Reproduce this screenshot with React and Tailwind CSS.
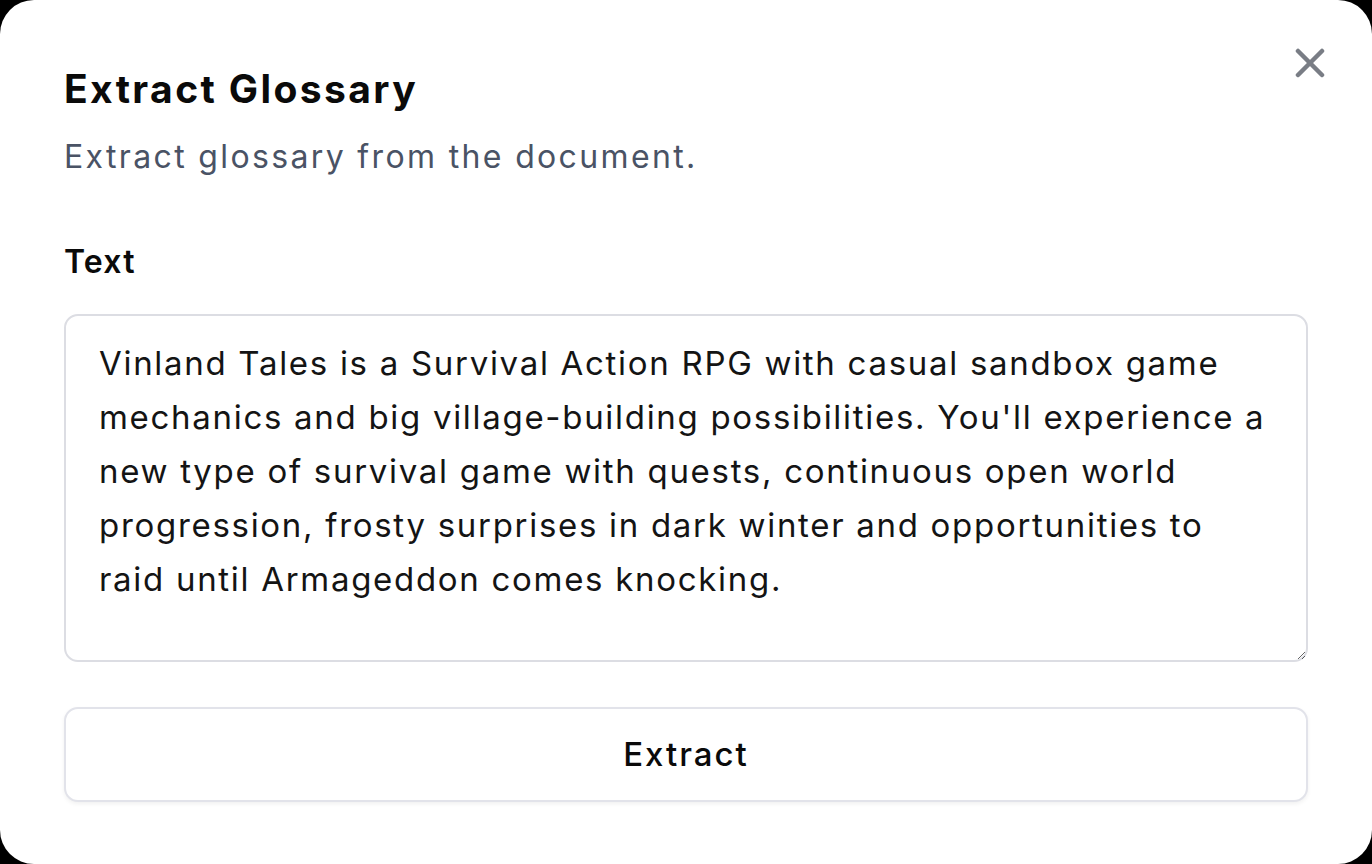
import React, { useState } from 'react';

function CloseIcon() {
  return (
    <svg width="30" height="30" viewBox="0 0 30 30" fill="none" stroke="currentColor" strokeWidth="4.5" strokeLinecap="round">
      <line x1="3" y1="3" x2="27" y2="27" />
      <line x1="27" y1="3" x2="3" y2="27" />
    </svg>
  );
}

const sample = "Vinland Tales is a Survival Action RPG with casual sandbox game mechanics and big village-building possibilities. You'll experience a new type of survival game with quests, continuous open world progression, frosty surprises in dark winter and opportunities to raid until Armageddon comes knocking.";

export default function App() {
  const [text, setText] = useState(sample);

  return (
    <div className="h-[864px] w-[1372px] bg-black font-['Inter',_'Liberation_Sans',_sans-serif]">
      <div className="relative flex h-full w-full flex-col rounded-[34px] bg-white px-16 pt-[60px]">
        {/* close */}
        <button className="absolute right-[47px] top-[48px] text-[#6b6f78] opacity-90">
          <CloseIcon />
        </button>

        {/* header */}
        <h2 className="text-[39px] font-bold leading-[58px] tracking-[2.4px] text-[#0a0a0a]">Extract Glossary</h2>
        <p className="mt-[15px] text-[32px] leading-[48px] tracking-[2.35px] text-[#4a5365]">Extract glossary from the document.</p>

        {/* field */}
        <label className="mt-[61px] text-[32px] font-semibold leading-[40px] tracking-[1.2px] text-[#0a0a0a]">Text</label>
        <textarea
          value={text}
          onChange={(e) => setText(e.target.value)}
          className="mt-[32px] h-[348px] w-full resize-y rounded-[14px] border-2 border-[#dcdde3] pl-[33px] pr-[34px] pt-[20px] text-[33px] leading-[54px] tracking-[1.7px] text-[#141414] outline-none"
        />

        <button className="mt-[45px] h-[95px] w-full rounded-[14px] border-2 border-[#e2e3ea] bg-white text-[33px] font-medium tracking-[2px] text-[#0a0a0a] shadow-[0_2px_4px_rgba(0,0,0,0.06)]">
          Extract
        </button>
      </div>
    </div>
  );
}
